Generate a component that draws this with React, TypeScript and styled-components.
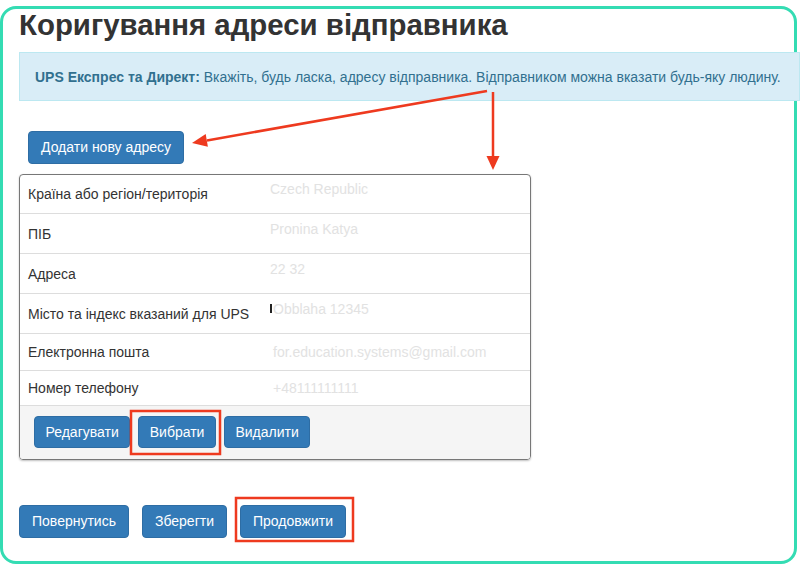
import styled, { createGlobalStyle } from "styled-components";

const GlobalStyle = createGlobalStyle`
  html, body {
    margin: 0;
    padding: 0;
    background: #fff;
  }
  body {
    font-family: "Liberation Sans", Arial, sans-serif;
    font-size: 14px;
    color: #333;
  }
  * {
    box-sizing: border-box;
  }
`;

const Page = styled.div`
  position: relative;
  width: 800px;
  height: 567px;
  overflow: hidden;
  padding-top: 6px;
`;

const Frame = styled.div`
  width: 797px;
  height: 558px;
  border: 3px solid #34dcb3;
  border-radius: 16px;
  padding-left: 16px;
`;

const Title = styled.h1`
  margin: 0;
  font-size: 29.4px;
  line-height: 32px;
  font-weight: 700;
  color: #333;
`;

const Alert = styled.div`
  margin: 11px -6px 0 0;
  padding: 14px 15px 13px;
  background: #d9edf7;
  border: 1px solid #bce8f1;
  color: #31708f;
  font-size: 14px;
  line-height: 20px;

  strong {
    font-weight: 700;
  }
`;

const Button = styled.button<{ $px?: number }>`
  display: inline-block;
  height: 33px;
  padding: 0 ${(p) => p.$px ?? 12}px;
  background: #337ab7;
  border: 1px solid #2e6da4;
  border-radius: 4px;
  color: #fff;
  font-family: inherit;
  font-size: 14px;
  line-height: 31px;
  white-space: nowrap;
  cursor: pointer;
`;

const AddButton = styled(Button)`
  margin: 30px 0 0 9px;
`;

const Card = styled.div`
  width: 512px;
  margin-top: 10px;
  border: 1px solid #777;
  border-radius: 4px;
  box-shadow: 0 1px 2px rgba(0, 0, 0, 0.25);
  overflow: hidden;
`;

const Row = styled.div<{ $h: number }>`
  display: grid;
  grid-template-columns: 242px 1fr;
  align-items: center;
  height: ${(p) => p.$h}px;
  padding-left: 8px;
  border-bottom: 1px solid #ddd;
`;

const Label = styled.span`
  color: #333;
  font-size: 14px;
`;

const Value = styled.span<{ $lift?: boolean }>`
  color: #e2e2e2;
  font-size: 14px;
  padding-bottom: ${(p) => (p.$lift ? 10 : 0)}px;
  padding-left: ${(p) => (p.$lift ? 0 : 3)}px;
`;

const Caret = styled.span`
  display: inline-block;
  width: 2px;
  height: 9px;
  margin-right: 1px;
  background: #222;
  vertical-align: 1px;
`;

const Footer = styled.div`
  display: flex;
  gap: 8px;
  height: 53px;
  padding: 10px 0 0 14px;
  background: #f5f5f5;
`;

const FooterButton = styled(Button)`
  height: 32px;
  line-height: 30px;
  padding: 0 10.5px;
`;

const Actions = styled.div`
  display: flex;
  gap: 13px;
  margin-top: 45px;
`;

const Overlay = styled.svg`
  position: absolute;
  top: 0;
  left: 0;
  pointer-events: none;
`;

const rows = [
  { label: "Країна або регіон/територія", value: "Czech Republic", h: 39, lift: true },
  { label: "ПІБ", value: "Pronina Katya", h: 40, lift: true },
  { label: "Адреса", value: "22 32", h: 40, lift: true },
  { label: "Місто та індекс вказаний для UPS", value: "Obblaha 12345", h: 40, lift: true, caret: true },
  { label: "Електронна пошта", value: "for.education.systems@gmail.com", h: 37 },
  { label: "Номер телефону", value: "+48111111111", h: 35 },
];

const RED = "#ee3a1f";

export default function App() {
  return (
    <>
      <GlobalStyle />
      <Page>
        <Frame>
          <Title>Коригування адреси відправника</Title>
          <Alert>
            <strong>UPS Експрес та Директ:</strong> Вкажіть, будь ласка, адресу відправника.
            Відправником можна вказати будь-яку людину.
          </Alert>
          <AddButton>Додати нову адресу</AddButton>
          <Card>
            {rows.map((r) => (
              <Row key={r.label} $h={r.h}>
                <Label>{r.label}</Label>
                <Value $lift={r.lift}>
                  {r.caret && <Caret />}
                  {r.value}
                </Value>
              </Row>
            ))}
            <Footer>
              <FooterButton>Редагувати</FooterButton>
              <FooterButton>Вибрати</FooterButton>
              <FooterButton>Видалити</FooterButton>
            </Footer>
          </Card>
          <Actions>
            <Button $px={12}>Повернутись</Button>
            <Button $px={12}>Зберегти</Button>
            <Button $px={12}>Продовжити</Button>
          </Actions>
        </Frame>
        <Overlay width="800" height="567" viewBox="0 0 800 567">
          <line x1="487" y1="91" x2="207" y2="140.4" stroke={RED} strokeWidth="2.5" />
          <polygon points="192,143 207.9,146.8 205.7,134" fill={RED} />
          <line x1="493" y1="92" x2="493" y2="157" stroke={RED} strokeWidth="2.5" />
          <polygon points="493,170 486.5,156 499.5,156" fill={RED} />
          <rect x="131" y="411" width="89" height="43" fill="none" stroke={RED} strokeWidth="2.5" />
          <rect x="236" y="498" width="117" height="43" fill="none" stroke={RED} strokeWidth="2.5" />
        </Overlay>
      </Page>
    </>
  );
}
